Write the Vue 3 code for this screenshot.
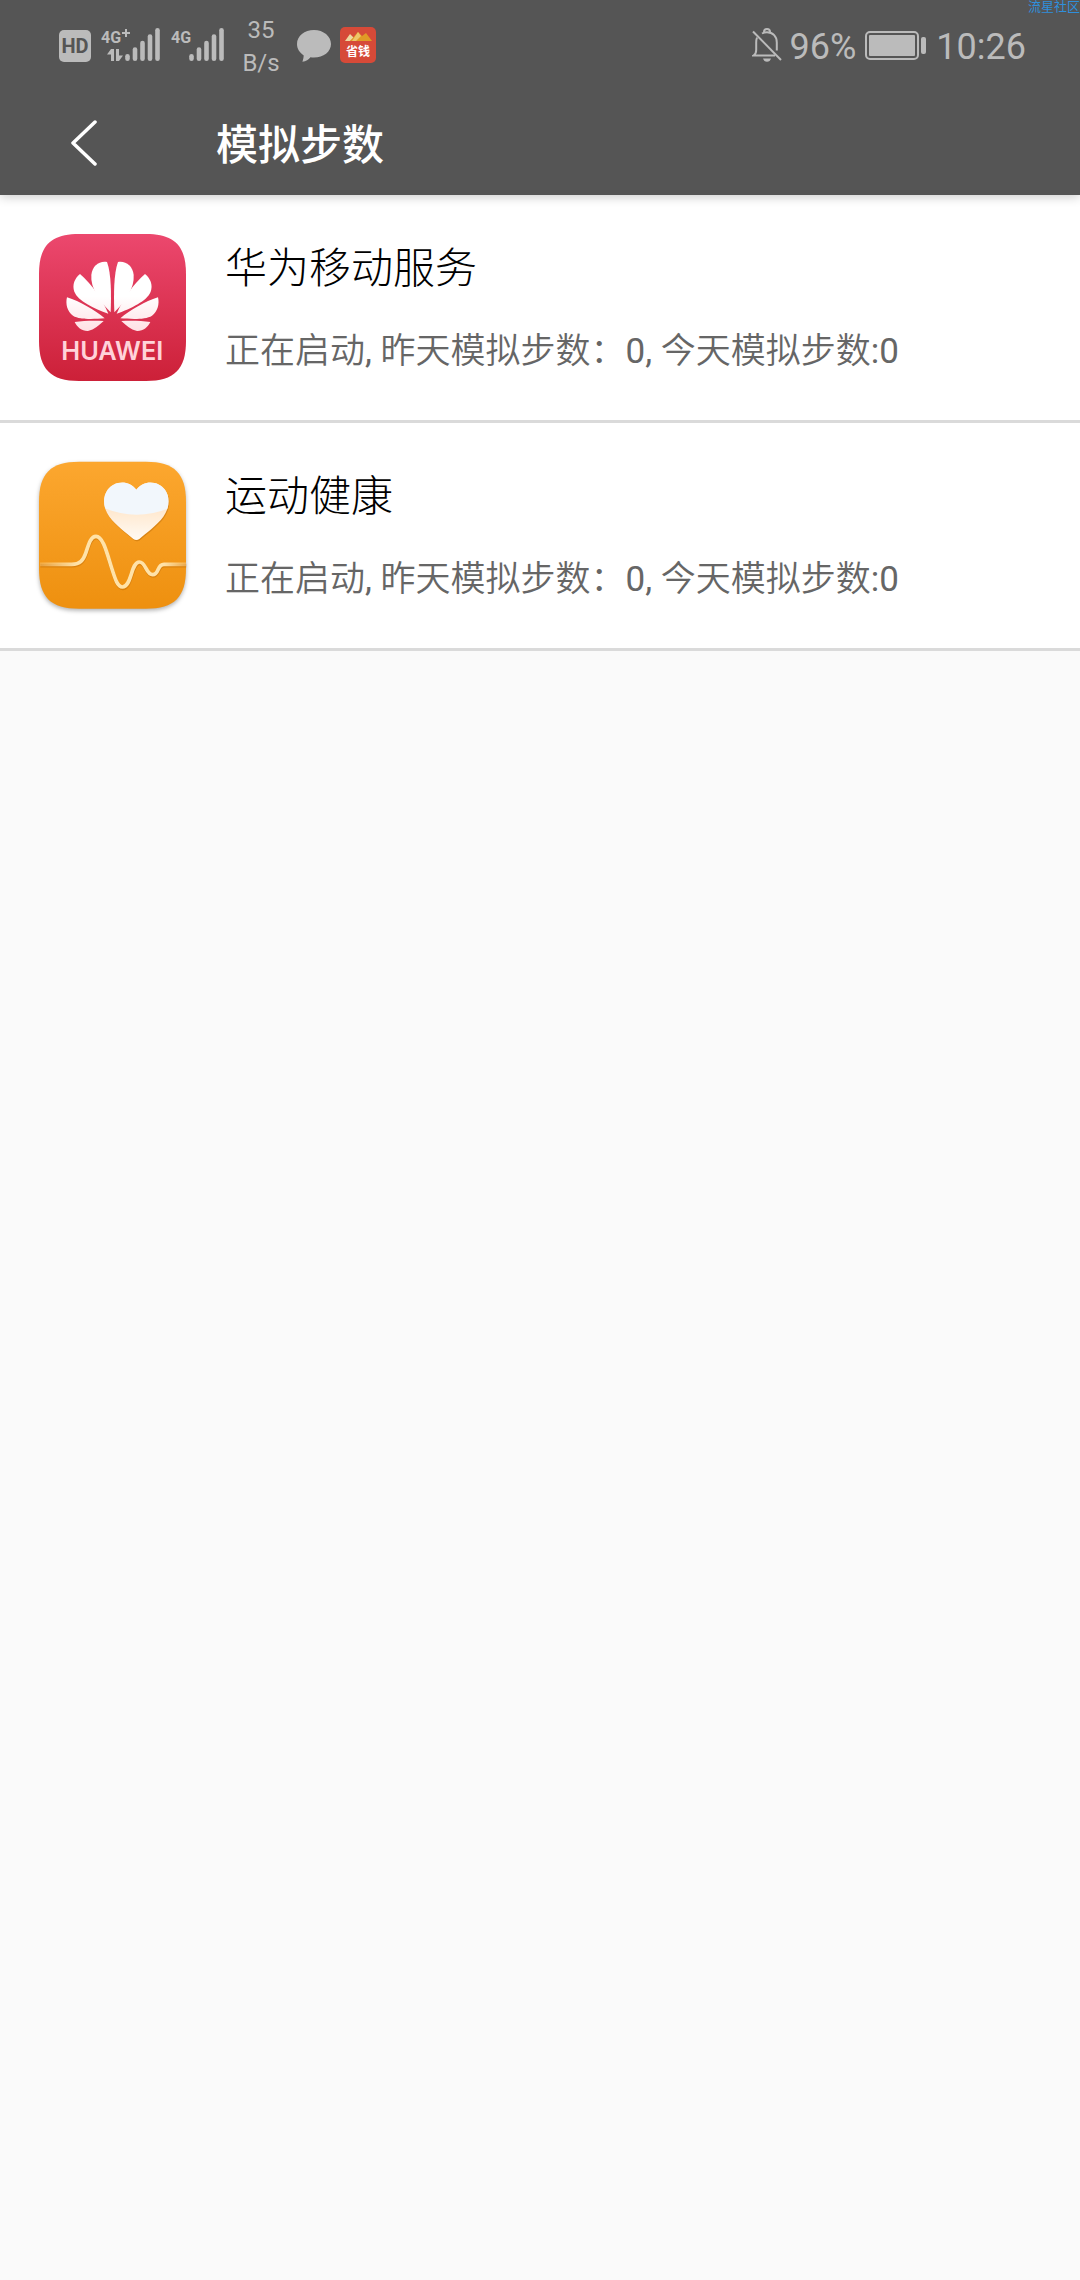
<template>
    <div class="page">

        <!-- status bar -->
        <div class="status">
            <svg class="hd" viewBox="0 0 32 36" width="32" height="36">
                <rect x="0" y="3" width="32" height="32" rx="5" fill="#bbb" />
                <text x="16" y="26" text-anchor="middle" class="hd-text">HD</text>
            </svg>

            <svg v-for="sim in sims" :key="sim.id" class="sim" :viewBox="`0 0 ${sim.width} 36`" :width="sim.width" height="36">
                <text x="0" y="16" class="sim-text">4G</text>
                <path v-if="sim.data" d="M25 2v8M21 6h8" stroke="#bbb" stroke-width="2" />
                <path v-if="sim.data" d="M6 27.500L10 22h3v12h-3v-6.500zM15 22h3v6.500h4L18 34h-3z" fill="#bbb" />
                <path
                    v-for="(x, i) in sim.bars"
                    :key="x"
                    :d="`M${x} ${barTops[i]}V31.700`"
                    stroke="#bbb"
                    stroke-width="4.600"
                    stroke-linecap="round"
                />
            </svg>

            <div class="rate">
                <span>35</span>
                <span>B/s</span>
            </div>

            <svg class="bubble" viewBox="0 0 34 36" width="34" height="36">
                <path d="M17 3C7.500 3 0 9 0 17c0 4.800 2.600 8.600 6.600 11.200.2 2-.4 4-1.200 6.600 3.800-.6 6-2 8-4.600 1.200.2 2.400.3 3.600.3 9.500 0 17-5.800 17-13.500S26.500 3 17 3z" fill="#bbb" />
            </svg>

            <svg class="deal" viewBox="0 0 36 36" width="36" height="36">
                <rect width="36" height="36" rx="5" fill="#d64a38" />
                <path d="M5 14l5-7 4 4-4 3z" fill="#ecd9a0" />
                <path d="M10 14l8-9 4 4 4-3 6 8z" fill="#e09a26" />
                <path d="M12 14l6-9 3 4-5 5z" fill="#edc66a" />
                <text x="18" y="29" text-anchor="middle" class="deal-text">省钱</text>
            </svg>

            <div class="right">
                <svg viewBox="0 0 30 36" width="30" height="36" fill="none" stroke="#bbb" stroke-width="2">
                    <path d="M1 4.500L29 33" />
                    <path d="M5 10.500c-.6 1.600-.8 3.200-.8 5v7.500c0 2.500-1 4.500-2.700 5.500H23" />
                    <path d="M10 6.500c1.400-.8 3-1.200 5-1.200 6 0 9.800 4.200 9.800 10.200v8" />
                    <path d="M12 5a3 3 0 0 1 6 0" />
                    <path d="M11 31.500h8c-.5 2-2 3.300-4 3.300s-3.500-1.300-4-3.300z" fill="#bbb" stroke="none" />
                </svg>
                <span class="percent">96%</span>
                <svg class="battery" viewBox="0 0 61 36" width="61" height="36">
                    <rect x="1" y="5" width="52" height="27" rx="4" fill="none" stroke="#bbb" stroke-width="2" />
                    <rect x="4" y="8" width="46" height="21" rx="1" fill="#bbb" />
                    <rect x="56" y="10" width="5" height="17" rx="2" fill="#bbb" />
                </svg>
                <span class="clock">10:26</span>
            </div>
        </div>

        <!-- title bar -->
        <header class="bar">
            <button type="button" class="back" aria-label="返回">
                <svg viewBox="0 0 28 46" width="28" height="46">
                    <path d="M25 2L3 23l22 21" fill="none" stroke="#fff" stroke-width="3.500" stroke-linecap="round" stroke-linejoin="round" />
                </svg>
            </button>
            <h1>模拟步数</h1>
        </header>

        <!-- app list -->
        <ul class="list">
            <li v-for="app in apps" :key="app.id" class="row">
                <svg v-if="app.id === 'hms'" class="icon" viewBox="57 70 441 441">
                    <defs>
                        <linearGradient id="red" x1="0" y1="0" x2="0" y2="1">
                            <stop offset="0" stop-color="#ec486e" />
                            <stop offset="1" stop-color="#cc2038" />
                        </linearGradient>
                        <linearGradient id="petal" gradientUnits="userSpaceOnUse" x1="0" y1="150" x2="0" y2="365">
                            <stop offset="0.500" stop-color="#fff" />
                            <stop offset="1" stop-color="#ffdfe3" />
                        </linearGradient>
                    </defs>
                    <path :d="tile" fill="url(#red)" />
                    <g v-for="side in sides" :key="side" :transform="side" fill="url(#petal)">
                        <path d="M272 305C274 250 274 190 261 154C238 150 217 165 214 193C211 232 238 272 272 305z" />
                        <path d="M265 309C248 268 215 220 180 190C163 204 156 223 163 243C174 271 222 293 265 309z" />
                        <path d="M254 323C224 298 180 272 141 260C136 280 142 303 159 315C180 328 222 325 254 323z" />
                        <path d="M251 331C225 329 190 330 164 334C171 350 187 362 204 361C223 357 238 343 251 331z" />
                    </g>
                    <text x="277" y="447" text-anchor="middle" class="brand">HUAWEI</text>
                </svg>

                <svg v-else class="icon shadow" viewBox="57 67 441 441">
                    <defs>
                        <linearGradient id="orange" x1="0" y1="0" x2="0" y2="1">
                            <stop offset="0" stop-color="#fca72f" />
                            <stop offset="1" stop-color="#ee900f" />
                        </linearGradient>
                        <linearGradient id="cream" x1="0" y1="0" x2="0" y2="1">
                            <stop offset="0.500" stop-color="#ffe9d0" />
                            <stop offset="1" stop-color="#fffaf4" />
                        </linearGradient>
                        <linearGradient id="pulse" gradientUnits="userSpaceOnUse" x1="60" y1="0" x2="498" y2="0">
                            <stop offset="0" stop-color="#ffe2a8" stop-opacity="0.300" />
                            <stop offset="0.250" stop-color="#ffe2a8" />
                            <stop offset="0.850" stop-color="#ffe2a8" />
                            <stop offset="1" stop-color="#ffe2a8" stop-opacity="0.400" />
                        </linearGradient>
                        <clipPath id="heart">
                            <path :d="heart" />
                        </clipPath>
                    </defs>
                    <path :d="tile" fill="url(#orange)" transform="translate(0 -4)" />
                    <path :d="heart" fill="#a85c00" opacity="0.350" transform="translate(2 4)" />
                    <path :d="heart" fill="url(#cream)" />
                    <path d="M240 110H460V200Q350 250 240 200z" fill="#f2f7fc" clip-path="url(#heart)" />
                    <path :d="wave" fill="none" stroke="#b86400" stroke-opacity="0.400" stroke-width="11" transform="translate(1 4)" />
                    <path :d="wave" fill="none" stroke="url(#pulse)" stroke-width="11" />
                </svg>

                <div class="info">
                    <h2>{{ app.name }}</h2>
                    <p>正在启动, 昨天模拟步数：{{ app.yesterday }}, 今天模拟步数:{{ app.today }}</p>
                </div>
            </li>
        </ul>

        <span class="mark">流星社区</span>
    </div>
</template>

<script setup>
    import { ref } from 'vue'

    const apps = ref([
        { id: 'hms', name: '华为移动服务', yesterday: 0, today: 0 },
        { id: 'health', name: '运动健康', yesterday: 0, today: 0 }
    ])

    const sims = [
        { id: 1, data: true, width: 60, bars: [26.5, 34, 41.5, 49, 56.5] },
        { id: 2, data: false, width: 53, bars: [20.5, 28, 35.5, 43, 50.5] }
    ]
    const barTops = [29.3, 22.5, 16, 9.5, 3.3]

    // the logo is symmetric, so the petals are drawn once and mirrored
    const sides = ['', 'translate(555 0) scale(-1 1)']

    const tile = 'M57 190C57 105 92 70 177 70H378C463 70 498 105 498 190V391C498 476 463 511 378 511H177C92 511 57 476 57 391z'
    const heart = 'M349 150C325 118 282 124 263 150C246 174 250 206 268 231C287 257 320 280 340 298Q349 304 358 298C378 280 411 257 430 231C448 206 452 174 435 150C416 124 373 118 349 150z'
    const wave = 'M60 374H155C180 374 190 362 198 338C207 310 213 290 228 290C250 290 262 345 275 385C286 420 293 442 307 442C336 442 332 367 358 367C378 367 378 405 398 405C418 405 410 374 432 374H498'
</script>

<style scoped>
    .page {
        position: relative;
        font-family: Roboto, "Noto Sans CJK SC", sans-serif;
    }

    .status {
        position: relative;
        z-index: 1;
        display: flex;
        align-items: center;
        height: 90px;
        padding: 0 54px 0 59px;
        background: #555;
        color: #bbb;
        box-sizing: border-box;
    }

    .hd-text {
        font-size: 20px;
        font-weight: 700;
        fill: #555;
    }

    .sim {
        margin-left: 10px;
    }

    .sim-text {
        font-size: 16px;
        font-weight: 700;
        fill: #bbb;
    }

    .rate {
        display: flex;
        flex-direction: column;
        align-items: center;
        width: 40px;
        margin-left: 17px;
        padding-top: 3px;
        font-size: 24px;
        line-height: 33px;
    }

    .bubble {
        margin-left: 16px;
    }

    .deal {
        margin-left: 9px;
    }

    .deal-text {
        font-size: 12px;
        font-weight: 700;
        fill: #fff;
    }

    .right {
        display: flex;
        align-items: center;
        margin-left: auto;
        font-size: 36px;
        line-height: 42px;
    }

    .percent,
    .clock {
        padding-top: 3px;
    }

    .percent {
        margin-left: 8px;
    }

    .battery {
        margin: 0 10px 0 9px;
    }

    .bar {
        position: relative;
        display: flex;
        align-items: center;
        height: 105px;
        background: #555;
        color: #fff;
        box-shadow: 0 2px 10px rgba(0, 0, 0, 0.2);
    }

    .back {
        display: flex;
        align-items: center;
        justify-content: center;
        width: 168px;
        height: 105px;
        padding: 0;
        border: 0;
        background: none;
    }

    h1 {
        margin: 0 0 0 48px;
        padding-top: 6px;
        font-size: 42px;
        line-height: 60px;
        font-weight: 500;
    }

    .list {
        margin: 0;
        padding: 0;
        list-style: none;
    }

    .row {
        display: flex;
        align-items: center;
        gap: 39px;
        padding: 39px;
        background: #fff;
        border-bottom: 3px solid #dadada;
    }

    .icon {
        flex: none;
        width: 147px;
        height: 147px;
    }

    .shadow {
        overflow: visible;
        filter: drop-shadow(0 2px 2px rgba(0, 0, 0, 0.3));
    }

    .brand {
        font-family: Inter, sans-serif;
        font-size: 76px;
        font-weight: 600;
        fill: #ffd3d9;
    }

    .info {
        display: flex;
        flex-direction: column;
        gap: 28px;
    }

    h2 {
        margin: 0;
        color: #000;
        font-size: 42px;
        line-height: 60px;
        font-weight: 300;
    }

    p {
        margin: 0;
        color: #666;
        font-family: Roboto, "Noto Sans CJK SC DemiLight", "Noto Sans CJK SC", sans-serif;
        font-size: 35px;
        line-height: 50px;
        font-weight: 400;
    }

    .mark {
        position: absolute;
        z-index: 2;
        top: 0;
        right: 0;
        color: #2f8fdc;
        font-size: 13px;
        line-height: 13px;
    }
</style>

<style>
    body {
        margin: 0;
        background: #fafafa;
    }
</style>
